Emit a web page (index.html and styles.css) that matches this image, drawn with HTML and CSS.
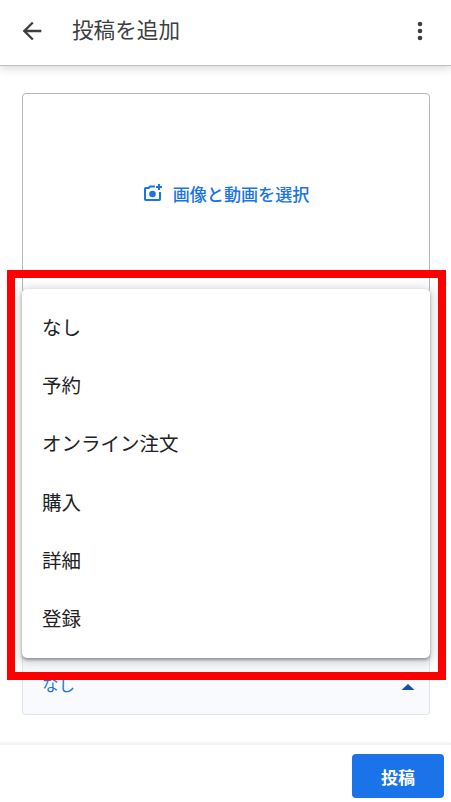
FILE: index.html
```html
<!DOCTYPE html>
<html lang="ja">
<head>
<meta charset="utf-8">
<title>投稿を追加</title>
<link rel="stylesheet" href="styles.css">
</head>
<body>
<div class="page">
  <header class="topbar">
    <svg class="back" width="28" height="28" viewBox="0 0 24 24"><path d="M20 11H7.830l5.590-5.590L12 4l-8 8 8 8 1.410-1.410L7.830 13H20z" fill="#3c4043"/></svg>
    <h1 class="title">投稿を追加</h1>
    <svg class="more" width="24" height="24" viewBox="0 0 24 24"><circle cx="12" cy="6" r="2.300"/><circle cx="12" cy="13" r="2.300"/><circle cx="12" cy="20" r="2.300"/></svg>
  </header>
  <main class="content">
    <section class="upload">
      <svg class="cam" width="20" height="20" viewBox="0 0 20 20" fill="none"><path d="M12 3.500H7L5.600 5H2.800A.8.8 0 0 0 2 5.800V16.200a.8.8 0 0 0 .8.8H16.200a.8.8 0 0 0 .8-.8V9" stroke="#1a73e8" stroke-width="2"/><circle cx="9.500" cy="11" r="3.300" fill="#1a73e8"/><path d="M16 1v6M13 4h6" stroke="#1a73e8" stroke-width="2"/></svg>
      <span class="upload-label">画像と動画を選択</span>
    </section>
    <div class="select">
      <span class="select-value">なし</span>
      <svg class="caret" width="14" height="8" viewBox="0 0 14 8"><path d="M0.500 7L7 1l6.500 6z" fill="#174ea6"/></svg>
    </div>
  </main>
  <footer class="footer">
    <button class="post" type="button">投稿</button>
  </footer>
  <ul class="menu">
    <li>なし</li>
    <li>予約</li>
    <li>オンライン注文</li>
    <li>購入</li>
    <li>詳細</li>
    <li>登録</li>
  </ul>
  <div class="redframe"></div>
</div>
</body>
</html>
```

FILE: styles.css
```css
* { box-sizing: border-box; }
html, body { margin: 0; padding: 0; }
body {
  background: #fff;
  font-family: Roboto, "Noto Sans CJK JP", sans-serif;
  color: #3c4043;
}
.page {
  position: relative;
  width: 451px;
  height: 802px;
  display: flex;
  flex-direction: column;
  overflow: hidden;
}
.topbar {
  height: 66px;
  flex: none;
  display: flex;
  align-items: center;
  padding: 0 19px 5px 18px;
  border-bottom: 1px solid #bdbfc1;
  box-shadow: 0 2px 9px rgba(60, 64, 67, 0.22);
  background: #fff;
  position: relative;
}
.back { margin-top: 2px; }
.title {
  margin: 0 0 3px 26px;
  flex: 1;
  font-size: 21.6px;
  font-weight: 400;
  color: #3c4043;
}
.more { fill: #3c4043; }
.content {
  flex: 1;
  padding: 27px 21px 28px 22px;
  display: flex;
  flex-direction: column;
}
.upload {
  height: 200px;
  border: 1px solid #b4b7ba;
  border-radius: 4px;
  display: flex;
  align-items: center;
  justify-content: center;
  gap: 10px;
  flex: none;
}
.upload-label {
  font-size: 17.1px;
  font-weight: 500;
  color: #1a73e8;
}
.select {
  margin-top: auto;
  height: 62px;
  background: #f8fafe;
  border: 1px solid #e3e6e9;
  border-top: none;
  border-radius: 0 0 4px 4px;
  display: flex;
  align-items: center;
  justify-content: space-between;
  padding: 0 14px 0 19px;
}
.select-value {
  font-size: 16.500px;
  color: #1a73e8;
}
.caret { margin-top: 6px; }
.footer {
  height: 59px;
  flex: none;
  border-top: 2px solid #f1f3f4;
  box-shadow: 0 -1px 2px rgba(60, 64, 67, 0.05);
  display: flex;
  justify-content: flex-end;
  padding: 9px 7px 0 0;
}
.post {
  width: 92px;
  height: 44px;
  border: none;
  border-radius: 4px;
  background: #1a73e8;
  color: #fff;
  font-family: inherit;
  font-size: 17px;
  font-weight: 700;
}
.menu {
  position: absolute;
  left: 22px;
  top: 289px;
  width: 408px;
  height: 369px;
  margin: 0;
  padding: 8px 0;
  list-style: none;
  background: #fff;
  border-radius: 5px;
  box-shadow: 0 2px 3px rgba(60, 64, 67, 0.45), 0 2px 10px 3px rgba(60, 64, 67, 0.2);
}
.menu li {
  height: 58.3px;
  display: flex;
  align-items: center;
  padding-left: 20px;
  font-size: 19.500px;
  color: #202124;
}
.redframe {
  position: absolute;
  left: 7px;
  top: 270px;
  width: 439px;
  height: 410px;
  border: 8px solid #ff0000;
}
```
